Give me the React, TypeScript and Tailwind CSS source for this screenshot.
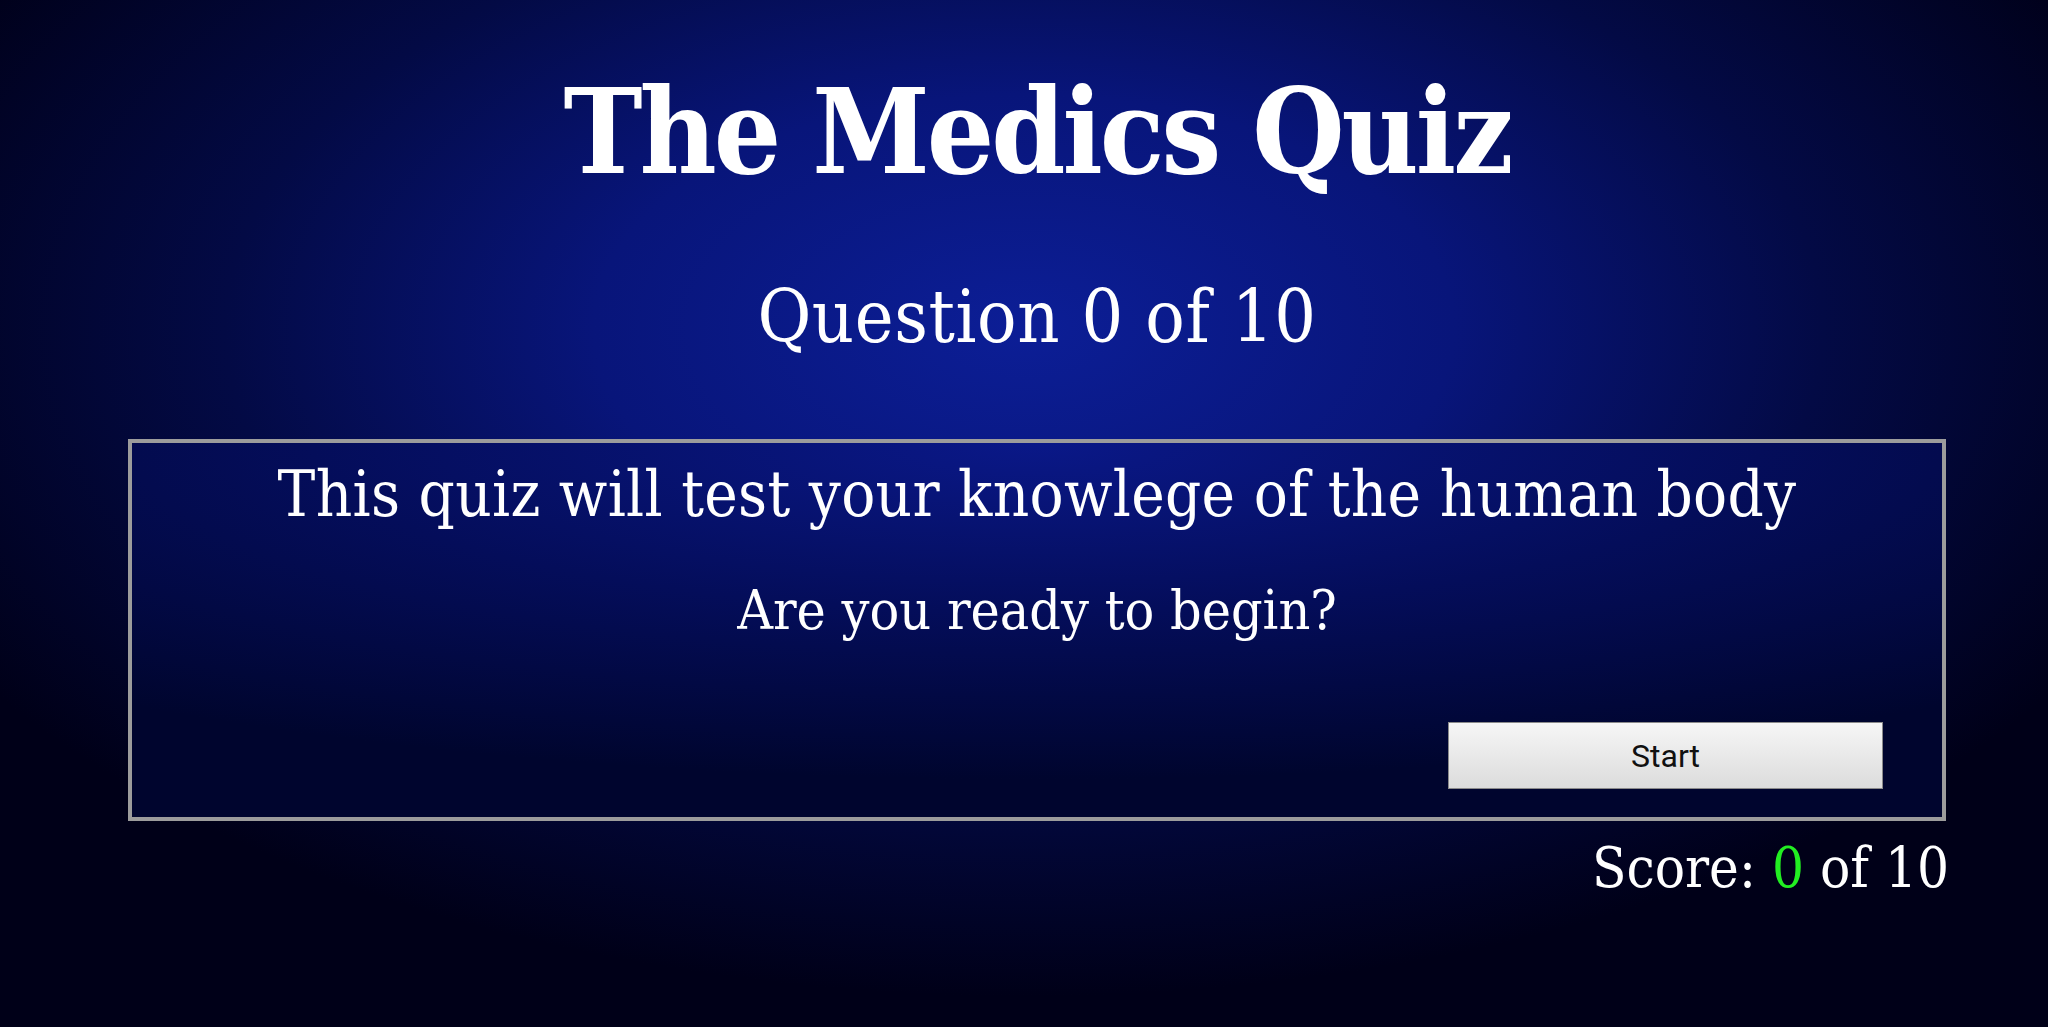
export default function App() {
  return (
    <div className="min-h-[1027px] w-full bg-[radial-gradient(ellipse_60%_65%_at_50%_32%,#0c1e96_0%,#08157a_35%,#030a45_65%,#000018_100%)] font-['DejaVu_Serif',serif] font-stretch-condensed text-white">
      <div className="flex flex-col pl-[26px]">
        <h1 className="mt-[62px] text-center text-[118px] leading-[140px] font-bold tracking-[-3px]">The Medics Quiz</h1>
        <h2 className="mt-[70px] text-center text-[73px] leading-[90px] tracking-[0.6px]">Question 0 of 10</h2>

        <div className="mx-auto mt-[77px] flex h-[382px] w-[1818px] flex-col border-4 border-[#9c9c9c] bg-[radial-gradient(ellipse_80%_90%_at_50%_0%,#0a1888_0%,#040d5a_50%,#00052e_100%)]">
          <p className="mt-[12px] text-center text-[63px] leading-[80px] tracking-[0.3px]">
            This quiz will test your knowlege of the human body
          </p>
          <p className="mt-[40px] text-center text-[55px] leading-[70px]">Are you ready to begin?</p>
          <div className="mt-auto mb-[28px] flex justify-end pr-[59px]">
            <button className="h-[67px] w-[435px] border border-[#8a8a8a] bg-gradient-to-b from-[#f6f6f6] to-[#dcdcdc] font-['Roboto',sans-serif] font-stretch-normal text-[32px] text-[#111]">
              Start
            </button>
          </div>
        </div>

        <div className="mt-[9px] flex w-[1923px] justify-end">
          <p className="text-[56px] leading-[76px]">
            Score: <span className="text-[#22ee22]">0</span> of 10
          </p>
        </div>
      </div>
    </div>
  );
}
